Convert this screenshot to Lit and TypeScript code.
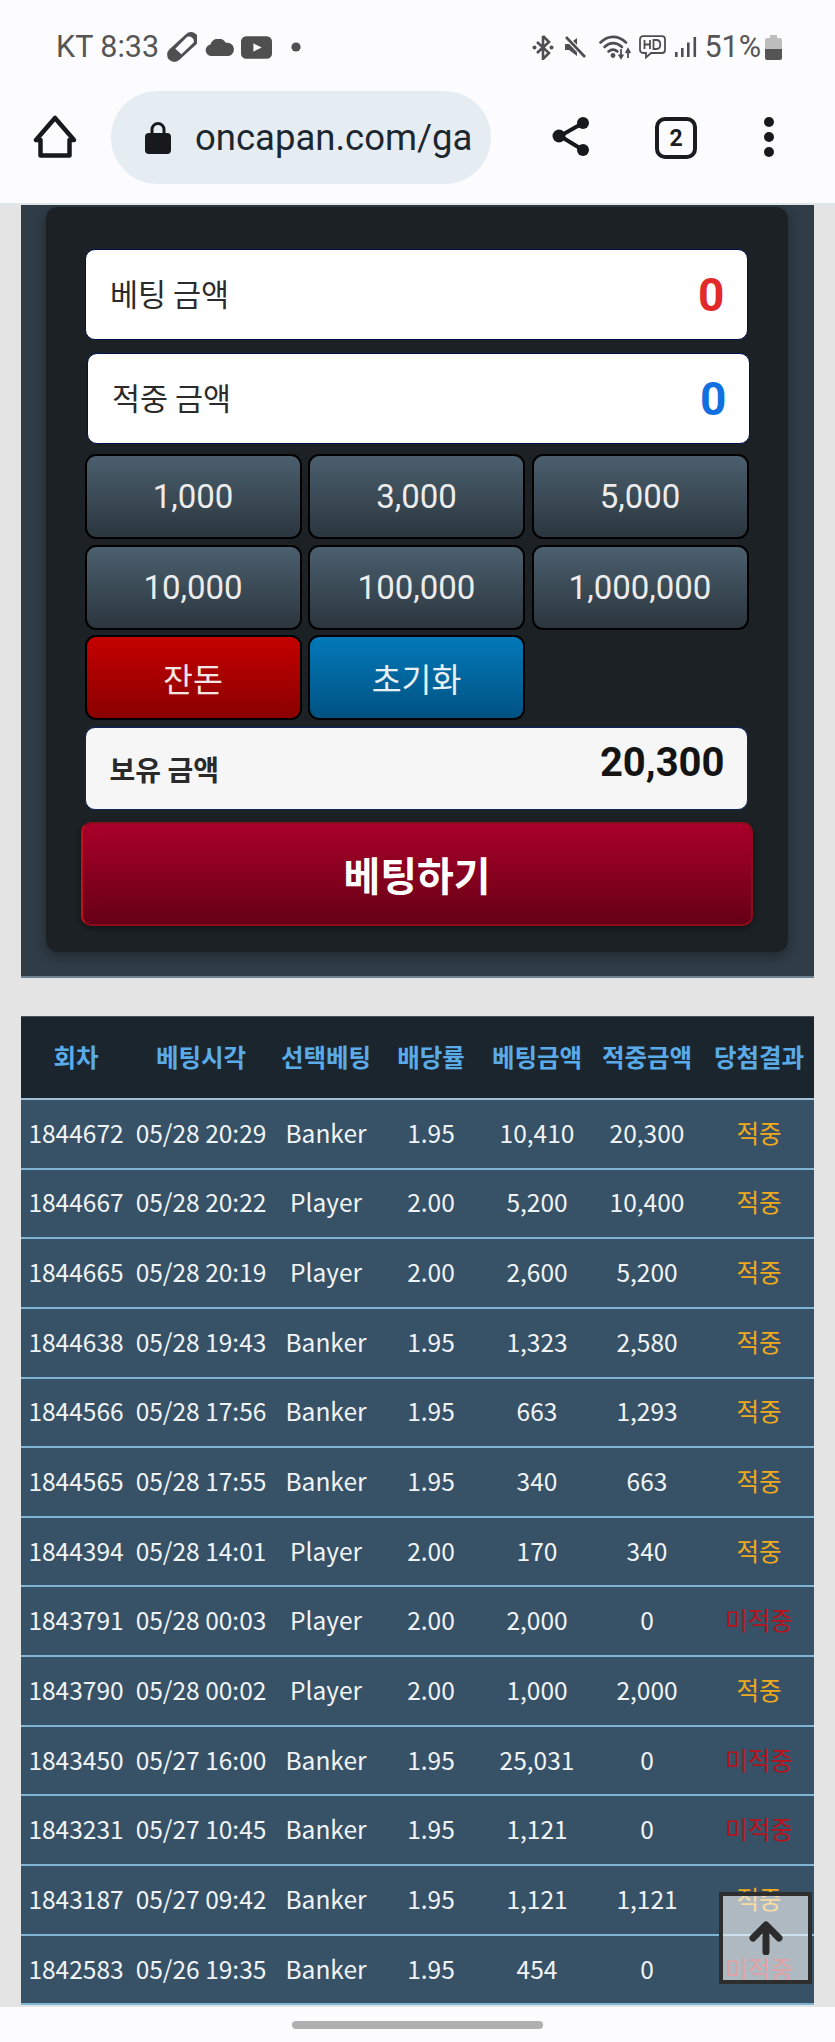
import { LitElement, html, css } from "lit";
import { customElement } from "lit/decorators.js";

const rows: [string, string, string, string, string, string, boolean][] = [
  ["1844672", "05/28 20:29", "Banker", "1.95", "10,410", "20,300", true],
  ["1844667", "05/28 20:22", "Player", "2.00", "5,200", "10,400", true],
  ["1844665", "05/28 20:19", "Player", "2.00", "2,600", "5,200", true],
  ["1844638", "05/28 19:43", "Banker", "1.95", "1,323", "2,580", true],
  ["1844566", "05/28 17:56", "Banker", "1.95", "663", "1,293", true],
  ["1844565", "05/28 17:55", "Banker", "1.95", "340", "663", true],
  ["1844394", "05/28 14:01", "Player", "2.00", "170", "340", true],
  ["1843791", "05/28 00:03", "Player", "2.00", "2,000", "0", false],
  ["1843790", "05/28 00:02", "Player", "2.00", "1,000", "2,000", true],
  ["1843450", "05/27 16:00", "Banker", "1.95", "25,031", "0", false],
  ["1843231", "05/27 10:45", "Banker", "1.95", "1,121", "0", false],
  ["1843187", "05/27 09:42", "Banker", "1.95", "1,121", "1,121", true],
  ["1842583", "05/26 19:35", "Banker", "1.95", "454", "0", false],
];
const heads = ["회차", "베팅시각", "선택베팅", "배당률", "베팅금액", "적중금액", "당첨결과"];
const amounts = ["1,000", "3,000", "5,000", "10,000", "100,000", "1,000,000"];

@customElement("app-root")
export class AppRoot extends LitElement {
  static styles = css`
    :host { display: flex; flex-direction: column; width: 835px; height: 2042px; overflow: hidden; background: #fcfcfe; font-family: Roboto, "Noto Sans CJK KR", sans-serif; position: relative; }
    .status { height: 91px; box-sizing: border-box; padding: 30px 53px 0 56px; display: flex; align-items: flex-start; justify-content: space-between; color: #555; flex: none; }
    .sgroup { display: flex; align-items: center; height: 34px; }
    .stext { font-size: 30.5px; line-height: 34px; color: #555; white-space: nowrap; }
    .sgroup svg { display: block; flex: none; fill: #4f4f4f; }
    .left .pill { margin-left: 8px; }
    .left .cloud { margin-left: 8px; }
    .left .yt { margin-left: 6px; }
    .left .dot { margin-left: 19px; }
    .right .g8 { margin-left: 9px; }
    .right .wifi { margin-left: 12px; }
    .right .hd { margin-left: 7px; }
    .right .pct { margin-left: 7px; }
    .right .bat { margin-left: 4px; }
    .toolbar { height: 114px; flex: none; display: flex; align-items: flex-start; box-sizing: border-box; padding-left: 32px; border-bottom: 2px solid #dfe6ec; }
    .home { margin-top: 24px; display: block; }
    .url { margin-left: 33px; width: 380px; height: 93px; border-radius: 47px; background: #e5edf3; display: flex; align-items: center; box-sizing: border-box; padding-left: 34px; flex: none; overflow: hidden; }
    .lock { flex: none; }
    .url span { font-size: 36.5px; color: #1d2730; margin-left: 24px; white-space: nowrap; width: 280px; overflow: hidden; }
    .share { margin-left: 59px; margin-top: 24px; display: block; fill: #17191d; }
    .tabs { margin-left: 65px; margin-top: 26px; width: 42px; height: 42px; box-sizing: border-box; border: 4.5px solid #1a1c20; border-radius: 10px; display: flex; align-items: center; justify-content: center; font-size: 23px; font-weight: 700; color: #1a1c20; }
    .more { margin-left: 66px; margin-top: 25px; display: block; }
    main { flex: none; height: 1802px; background: #e4e4e4; padding: 0 21px; box-sizing: border-box; overflow: hidden; }
    .outer { height: 773px; box-sizing: border-box; background: #303c46; border-bottom: 2px solid #6d8191; padding: 2px 26px 0 25px; }
    .inner { height: 745px; box-sizing: border-box; background: #1b2124; border-radius: 12px; box-shadow: 0 4px 12px rgba(0, 0, 0, .35); padding: 42px 0 0 38.5px; }
    .field { background: #fff; border: 1px solid #001050; border-radius: 10px; display: flex; align-items: center; justify-content: space-between; box-sizing: border-box; height: 91px; padding: 0 22px 0 24.5px; margin-bottom: 13px; width: 663px; }
    .field.second { margin-left: 2px; margin-bottom: 10px; }
    .field .lab { font-size: 30.5px; color: #2b2b2b; font-family: "Noto Sans CJK KR", sans-serif; margin-top: -4px; }
    .field .val { font-size: 46px; font-weight: 700; line-height: 1; }
    .red { color: #e22a2a; }
    .blue { color: #1170e0; }
    .grid { display: grid; grid-template-columns: repeat(3, 1fr); grid-auto-rows: 85px; gap: 5.5px 6.5px; width: 664px; margin-bottom: 7px; }
    .btn { border: 2px solid #000; border-radius: 11px; box-sizing: border-box; display: flex; align-items: center; justify-content: center; font-size: 33px; color: #ececec; background: linear-gradient(#4b5f6e, #2b363e); }
    .btn.r { background: linear-gradient(#c40000, #8a0000); color: #f4e6e6; font-size: 32.5px; font-family: "Noto Sans CJK KR", sans-serif; }
    .btn.b { background: linear-gradient(#0279b8, #005282); color: #e8f0f5; font-size: 32.5px; font-family: "Noto Sans CJK KR", sans-serif; }
    .hold { background: #f6f6f6; border: 1px solid #0c2460; border-radius: 10px; height: 83px; width: 663px; box-sizing: border-box; display: flex; align-items: center; justify-content: space-between; padding: 0 22px 0 24px; }
    .hold .lab { font-size: 28px; font-weight: 700; color: #2a2a2a; font-family: "Noto Sans CJK KR", sans-serif; margin-top: 0; }
    .hold .val { font-size: 40px; font-weight: 700; color: #141414; margin-top: -12px; }
    .submit { margin: 12px 0 0 -3.5px; width: 672px; height: 104px; box-sizing: border-box; border-radius: 10px; border: 2px solid #8c0b1c; border-left-color: #c01020; background: linear-gradient(#aa0029, #650016); display: flex; align-items: center; justify-content: center; color: #fff; font-size: 40px; font-weight: 700; font-family: "Noto Sans CJK KR", sans-serif; box-shadow: 0 2px 6px rgba(0, 0, 0, .4); }
    .table { margin-top: 38px; font-family: "Noto Sans CJK KR", sans-serif; }
    .row { display: grid; grid-template-columns: 110px 140px 110px 100px 112px 108px 113px; text-align: center; align-items: center; }
    .head { height: 84px; background: #1a252e; border-bottom: 2px solid #9fc0d8; box-sizing: border-box; border-top: 1px solid #4a5258; color: #5aabe8; font-size: 24.5px; font-weight: 700; padding-bottom: 2px; white-space: nowrap; }
    .body { height: 69.65px; box-sizing: border-box; background: #375267; border-bottom: 2.5px solid #7fb4d4; color: #f1f4f6; font-size: 24.5px; padding-bottom: 3px; white-space: nowrap; }
    .win { color: #efa91c; }
    .lose { color: #b5121b; }
    .last { padding-left: 3px; }
    .head span:last-child { padding-left: 3px; }
    .nav { flex: 1; display: flex; align-items: center; justify-content: center; }
    .nav i { display: block; width: 251px; height: 8px; border-radius: 4px; background: #b0b0b0; margin-top: 1px; }
    .top { position: absolute; left: 719px; top: 1892px; width: 93px; height: 92px; box-sizing: border-box; border: 4.5px solid #2e2e2e; background: rgba(255, 255, 255, .6); display: flex; align-items: center; justify-content: center; }
  `;

  render() {
    return html`
      <div class="status">
        <div class="sgroup left">
          <span class="stext">KT 8:33</span>
          <svg class="pill" width="30" height="30" viewBox="0 0 27 26"><path fill-rule="evenodd" d="M17 1.500a6.500 6.500 0 0 1 9.200 9.200L11.200 24.500a6.500 6.500 0 0 1-9.200-9.200ZM18.200 3.800 7.500 14.500 13 19.500 24 9A4.400 4.400 0 0 0 18.200 3.800Z"/></svg>
          <svg class="cloud" width="30" height="17" viewBox="0 0 28 16"><path d="M6 16a5.500 5.500 0 0 1-1-10.900A8 8 0 0 1 19.500 3.600 6.300 6.300 0 0 1 22 16Z"/></svg>
          <svg class="yt" width="31" height="23" viewBox="0 0 30 22"><path fill-rule="evenodd" d="M5 0H25a5 5 0 0 1 5 5V17a5 5 0 0 1-5 5H5a5 5 0 0 1-5-5V5a5 5 0 0 1 5-5ZM12 7V15L20 11Z"/></svg>
          <svg class="dot" width="10" height="10" viewBox="0 0 10 10"><circle cx="5" cy="5" r="4.600"/></svg>
        </div>
        <div class="sgroup right">
          <svg width="22" height="25" viewBox="0 0 22 25"><path d="M11 1V24L17 18 5 7M11 1L17 7 5 18" fill="none" stroke="#4f4f4f" stroke-width="2.600"/><circle cx="2.500" cy="12.500" r="2"/><circle cx="19.500" cy="12.500" r="2"/></svg>
          <svg class="g8" width="24" height="22" viewBox="0 0 24 22"><path d="M2 8H6L14 2V20L6 14H2Z"/><path d="M3 1L22 21" stroke="#fcfcfe" stroke-width="5"/><path d="M3 1L22 21" stroke="#4f4f4f" stroke-width="2.600"/></svg>
          <svg class="wifi" width="33" height="26" viewBox="0 0 33 26"><g fill="none" stroke="#4f4f4f" stroke-width="2.600" stroke-linecap="round"><path d="M1.500 8.500C9 1 19 1 27 8.500"/><path d="M5.500 13C11 8 17 8 23 13"/><path d="M9.500 17.500C12.500 15 15.500 15 18.500 17.500"/></g><circle cx="14" cy="21.500" r="2.400"/><path d="M22 15V23M19.800 20.500L22 24L24.200 20.500M29 24V16M26.800 19L29 15L31.200 19" fill="none" stroke="#4f4f4f" stroke-width="1.800"/></svg>
          <svg class="hd" width="27" height="24" viewBox="0 0 27 24"><path d="M4 1.200H23a3 3 0 0 1 3 3V15a3 3 0 0 1-3 3H12L7 22.500V18H4a3 3 0 0 1-3-3V4.200a3 3 0 0 1 3-3Z" fill="none" stroke="#4f4f4f" stroke-width="1.800"/><path d="M5.500 5V14M5.500 9.500H11M11 5V14M14.500 5V14H17.500C22.500 14 22.500 5 17.500 5Z" fill="none" stroke="#4f4f4f" stroke-width="1.800"/></svg>
          <svg class="g8" width="22" height="20" viewBox="0 0 22 20"><rect x="0" y="15" width="2.600" height="5"/><rect x="6" y="11" width="2.600" height="9"/><rect x="12" y="5.500" width="2.600" height="14.500"/><rect x="18.500" y="0" width="2.600" height="20"/></svg>
          <span class="stext pct">51%</span>
          <svg class="bat" width="17" height="25" viewBox="0 0 17 25"><path d="M5 0H12V3H15a2 2 0 0 1 2 2V14H0V5a2 2 0 0 1 2-2H5Z" fill="#bdbdbd"/><path d="M0 14H17V23a2 2 0 0 1-2 2H2a2 2 0 0 1-2-2Z" fill="#555"/></svg>
        </div>
      </div>
      <div class="toolbar">
        <svg class="home" width="46" height="44" viewBox="0 0 46 44"><path d="M23 3L4 25H8.500V40.500H37.500V25H42Z" fill="none" stroke="#17191d" stroke-width="4.500" stroke-linejoin="round"/></svg>
        <div class="url">
          <svg class="lock" width="26" height="33" viewBox="0 0 26 33"><path d="M7 13V8.500a6 6 0 0 1 12 0V13" fill="none" stroke="#17191d" stroke-width="3"/><rect x="0" y="12" width="26" height="21" rx="4" fill="#17191d"/></svg>
          <span>oncapan.com/ga</span>
        </div>
        <svg class="share" width="40" height="42" viewBox="0 0 40 42"><path d="M33 8L10 21L33 35" fill="none" stroke="#17191d" stroke-width="4"/><circle cx="33" cy="8" r="6"/><circle cx="9" cy="21" r="6.500"/><circle cx="33" cy="35" r="6"/></svg>
        <div class="tabs">2</div>
        <svg class="more" width="12" height="42" viewBox="0 0 12 42"><circle cx="6" cy="6" r="5" fill="#17191d"/><circle cx="6" cy="21" r="5" fill="#17191d"/><circle cx="6" cy="36" r="5" fill="#17191d"/></svg>
      </div>
      <main>
        <section class="outer">
          <div class="inner">
            <div class="field"><span class="lab">베팅 금액</span><span class="val red">0</span></div>
            <div class="field second"><span class="lab">적중 금액</span><span class="val blue">0</span></div>
            <div class="grid">
              ${amounts.map((a) => html`<div class="btn">${a}</div>`)}
              <div class="btn r">잔돈</div>
              <div class="btn b">초기화</div>
            </div>
            <div class="hold"><span class="lab">보유 금액</span><span class="val">20,300</span></div>
            <div class="submit">베팅하기</div>
          </div>
        </section>
        <section class="table">
          <div class="row head">${heads.map((h) => html`<span>${h}</span>`)}</div>
          ${rows.map(
            (r) => html`<div class="row body">
              <span>${r[0]}</span><span>${r[1]}</span><span>${r[2]}</span><span>${r[3]}</span><span>${r[4]}</span><span>${r[5]}</span>
              <span class="last ${r[6] ? "win" : "lose"}">${r[6] ? "적중" : "미적중"}</span>
            </div>`
          )}
        </section>
      </main>
      <div class="nav"><i></i></div>
      <div class="top">
        <svg width="34" height="34" viewBox="0 0 34 34"><path d="M17 31V5M4 17L17 4L30 17" fill="none" stroke="#2c2c2c" stroke-width="7" stroke-linecap="round" stroke-linejoin="round"/></svg>
      </div>
    `;
  }
}
